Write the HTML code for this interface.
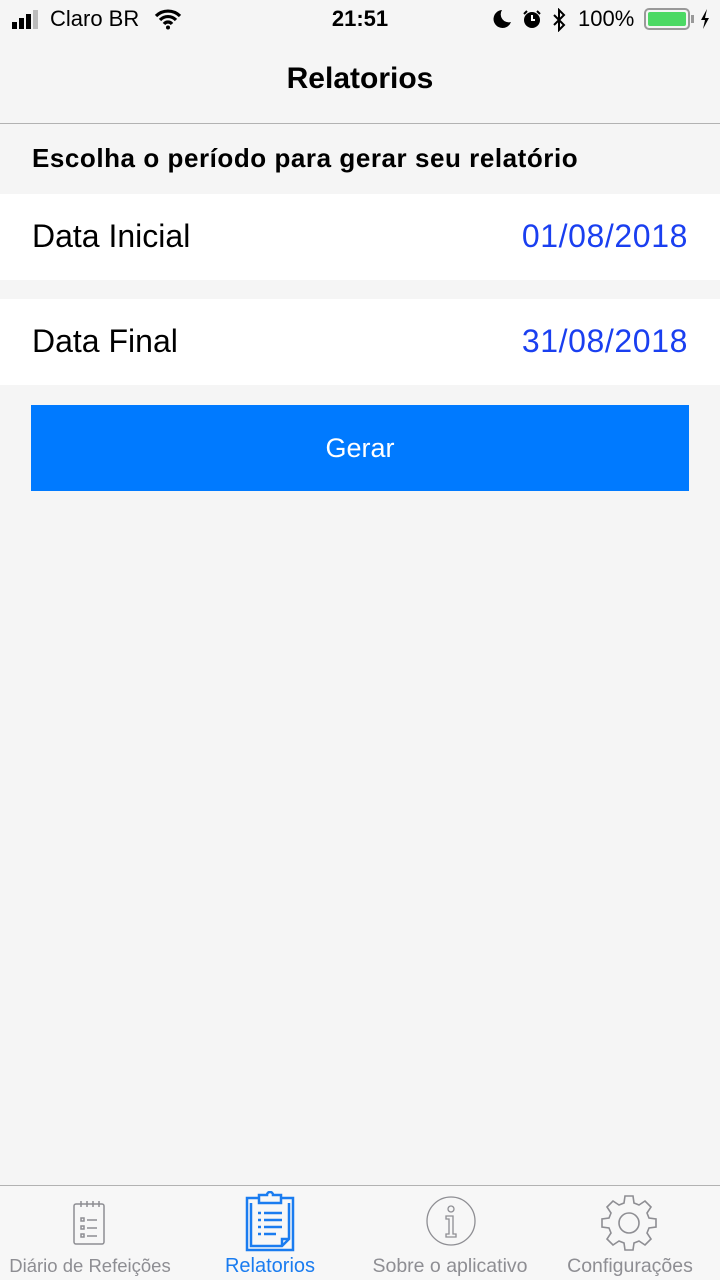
<!DOCTYPE html>
<html><head><meta charset="utf-8"><style>
*{margin:0;padding:0;box-sizing:border-box}
body{width:720px;height:1280px;background:#f5f5f5;font-family:"Liberation Sans",sans-serif;position:relative;overflow:hidden;color:#000}
.abs{position:absolute}
.row{position:absolute;left:0;width:720px;background:#fff;height:86px}
.row .l{position:absolute;left:32px;top:24px;font-size:32px}
.row .r{position:absolute;right:32px;top:24px;font-size:32px;color:#1a3ff0;letter-spacing:0.6px}
.tab{position:absolute;top:1255px;font-size:19px;color:#8e8e93;text-align:center;width:180px}
</style></head><body>
<!-- status bar -->
<div class="abs" style="left:12px;top:22px;width:5px;height:7px;background:#000"></div>
<div class="abs" style="left:19px;top:18px;width:5px;height:11px;background:#000"></div>
<div class="abs" style="left:26px;top:14px;width:5px;height:15px;background:#000"></div>
<div class="abs" style="left:33px;top:10px;width:5px;height:19px;background:#bbb"></div>
<div class="abs" style="left:50px;top:6px;font-size:22px">Claro BR</div>
<svg class="abs" style="left:154px;top:8px" width="28" height="22" viewBox="0 0 28 22"><path d="M2 8a17 17 0 0 1 24 0M6 12a11 11 0 0 1 16 0M10 16a5 5 0 0 1 8 0" stroke="#000" stroke-width="3.2" fill="none"/><circle cx="14" cy="19.5" r="2" fill="#000"/></svg>
<div class="abs" style="left:0;width:720px;top:6px;text-align:center;font-size:22px;font-weight:bold">21:51</div>
<svg class="abs" style="left:492px;top:9px" width="20" height="20" viewBox="0 0 20 20"><path d="M10 1a9 9 0 1 0 9 12A8 8 0 0 1 10 1z" fill="#000"/></svg>
<svg class="abs" style="left:521px;top:8px" width="22" height="22"><circle cx="11" cy="12" r="8" fill="#000"/><path d="M11 7v5h3" stroke="#fff" stroke-width="2" fill="none"/><path d="M3 6l3-3M19 6l-3-3" stroke="#000" stroke-width="2"/></svg>
<svg class="abs" style="left:551px;top:8px" width="16" height="24" viewBox="0 0 16 24"><path d="M3 7l10 10-5 5V2l5 5L3 17" stroke="#000" stroke-width="2" fill="none"/></svg>
<div class="abs" style="left:578px;top:6px;font-size:22px">100%</div>
<div class="abs" style="left:644px;top:8px;width:46px;height:22px;border:2px solid #999;border-radius:5px;padding:2px"><div style="width:100%;height:100%;background:#4cd964;border-radius:2px"></div></div>
<div class="abs" style="left:691px;top:15px;width:3px;height:8px;background:#999"></div>
<svg class="abs" style="left:699px;top:8px" width="12" height="22" viewBox="0 0 12 22"><path d="M8 1L2 12h4l-2 9 6-11H6z" fill="#000"/></svg>
<!-- nav -->
<div class="abs" style="left:0;width:720px;top:62px;text-align:center;font-size:30px;font-weight:bold">Relatorios</div>
<div class="abs" style="left:0;top:123px;width:720px;height:1px;background:#b2b2b2"></div>
<div class="abs" style="left:32px;top:143px;font-size:26px;font-weight:bold;letter-spacing:0.55px">Escolha o período para gerar seu relatório</div>
<div class="row" style="top:194px"><span class="l">Data Inicial</span><span class="r">01/08/2018</span></div>
<div class="row" style="top:299px"><span class="l">Data Final</span><span class="r">31/08/2018</span></div>
<div class="abs" style="left:31px;top:405px;width:658px;height:86px;background:#007aff;color:#fff;font-size:27px;text-align:center;line-height:86px">Gerar</div>
<!-- tab bar -->
<div class="abs" style="left:0;top:1185px;width:720px;height:95px;background:#f7f7f7;border-top:1px solid #b2b2b2"></div>
<svg class="abs" style="left:72px;top:1200px" width="34" height="46" viewBox="0 0 34 46" fill="none" stroke="#8e8e93" stroke-width="1.5"><rect x="2" y="4" width="30" height="40" rx="2"/><path d="M9 1v6M15 1v6M21 1v6M27 1v6M9 18h3v3H9zM9 26h3v3H9zM9 34h3v3H9zM15 20h10M15 28h10M15 36h10"/></svg>
<svg class="abs" style="left:243px;top:1191px" width="54" height="62" viewBox="0 0 54 62" fill="none" stroke="#1a7cf0" stroke-width="2.5"><path d="M16 7H4v52h46V7H38"/><path d="M8 12v43h31l7-7V12"/><path d="M16 4h8a3 3 0 0 1 6 0h8v8H16z"/><path d="M15 22h3M21 22h18M15 29h3M21 29h18M15 36h3M21 36h18M15 43h3M21 43h12M39 55v-7h7"/></svg>
<svg class="abs" style="left:425px;top:1195px" width="52" height="52" viewBox="0 0 52 52" fill="none" stroke="#8e8e93" stroke-width="1.3"><circle cx="26" cy="26" r="24"/><circle cx="26" cy="14" r="3"/><path d="M21 21h7v18h3v3H21v-3h3V24h-3z"/></svg>
<svg class="abs" style="left:600px;top:1194px" width="58" height="58" viewBox="-29 -29 58 58" fill="none" stroke="#8e8e93" stroke-width="1.6"><path d="M-4 -27h8l1 7 5 2 6-4 6 6-4 6 2 5 7 1v8l-7 1-2 5 4 6-6 6-6-4-5 2-1 7h-8l-1-7-5-2-6 4-6-6 4-6-2-5-7-1v-8l7-1 2-5-4-6 6-6 6 4 5-2z"/><circle r="10"/></svg>
<div class="tab" style="left:0;font-size:18.5px">Diário de Refeições</div>
<div class="tab" style="left:180px;color:#1a7cf0;font-size:20px">Relatorios</div>
<div class="tab" style="left:360px;font-size:19.5px">Sobre o aplicativo</div>
<div class="tab" style="left:540px;font-size:19.5px">Configurações</div>
</body></html>
